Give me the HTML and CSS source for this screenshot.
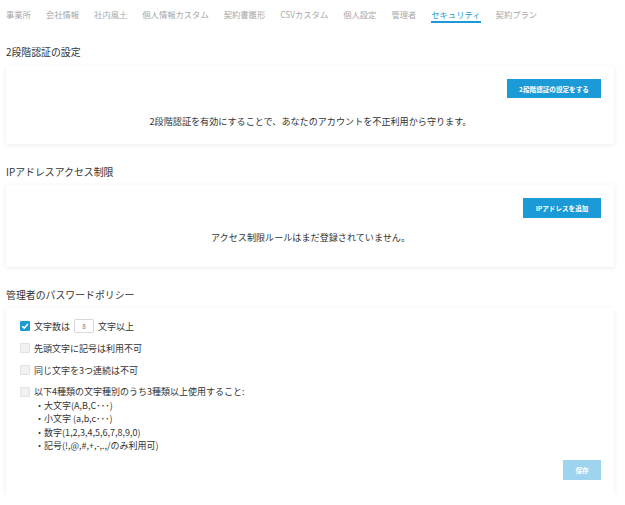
FILE: index.html
```html
<!DOCTYPE html>
<html lang="ja">
<head>
    <meta charset="UTF-8">
    <title>セキュリティ</title>
    <link rel="stylesheet" href="styles.css">
</head>
<body>
    <div class="pagina">
        <nav class="abas">
            <a class="aba">事業所</a>
            <a class="aba">会社情報</a>
            <a class="aba">社内風土</a>
            <a class="aba">個人情報カスタム</a>
            <a class="aba">契約書雛形</a>
            <a class="aba">CSVカスタム</a>
            <a class="aba">個人設定</a>
            <a class="aba">管理者</a>
            <a class="aba ativa">セキュリティ</a>
            <a class="aba">契約プラン</a>
        </nav>

        <h2 class="titulo primeiro">2段階認証の設定</h2>
        <div class="cartao cartao-2fa">
            <div class="acoes"><button class="botao botao-2fa">2段階認証の設定をする</button></div>
            <p class="texto">2段階認証を有効にすることで、あなたのアカウントを不正利用から守ります。</p>
        </div>

        <h2 class="titulo">IPアドレスアクセス制限</h2>
        <div class="cartao cartao-ip">
            <div class="acoes"><button class="botao botao-ip">IPアドレスを追加</button></div>
            <p class="texto">アクセス制限ルールはまだ登録されていません。</p>
        </div>

        <h2 class="titulo">管理者のパスワードポリシー</h2>
        <div class="cartao cartao-senha">
            <div class="linha">
                <span class="caixa marcada">
                    <svg viewBox="0 0 10 10" width="10" height="10"><path d="M2.2 5.2 L4.2 7.1 L7.9 2.9" fill="none" stroke="#fff" stroke-width="1.5"/></svg>
                </span>
                <span>文字数は</span>
                <input class="numero" type="text" value="8">
                <span>文字以上</span>
            </div>
            <div class="linha">
                <span class="caixa"></span>
                <span>先頭文字に記号は利用不可</span>
            </div>
            <div class="linha">
                <span class="caixa"></span>
                <span>同じ文字を3つ連続は不可</span>
            </div>
            <div class="linha linha-lista">
                <span class="caixa"></span>
                <div class="lista">
                    <div>以下4種類の文字種別のうち3種類以上使用すること:</div>
                    <div class="item">・大文字(A,B,C･･･)</div>
                    <div class="item">・小文字 (a,b,c･･･)</div>
                    <div class="item">・数字(1,2,3,4,5,6,7,8,9,0)</div>
                    <div class="item">・記号(!,@,#,+,-,.,/のみ利用可)</div>
                </div>
            </div>
            <div class="acoes"><button class="botao botao-salvar" disabled>保存</button></div>
        </div>
    </div>
</body>
</html>
```

FILE: styles.css
```css
body {
    margin: 0;
    padding: 0;
    background-color: #fff;
    font-family: "Noto Sans CJK JP", "Noto Sans", sans-serif;
    color: #333;
}
.pagina {
    width: 625px;
    padding: 8px 11px 0 6px;
    box-sizing: border-box;
}
.abas {
    display: flex;
    gap: 15px;
    padding-left: 0;
}
.aba {
    font-size: 8.3px;
    line-height: 12px;
    color: #a8a8a8;
    border-bottom: 2px solid transparent;
    padding-bottom: 1px;
    white-space: nowrap;
}
.aba.ativa {
    color: #1a9ad6;
    border-bottom-color: #1a9ad6;
}
.titulo {
    font-size: 9.9px;
    font-weight: normal;
    line-height: 14px;
    margin: 21px 0 6px;
    color: #333;
}
.titulo.primeiro {
    margin-top: 22px;
    margin-bottom: 7px;
}
.cartao {
    background: #fff;
    box-shadow: 0 1px 5px rgba(0, 0, 0, 0.08);
    padding: 13px 13px 0 14px;
}
.acoes {
    display: flex;
    justify-content: flex-end;
}
.botao {
    background-color: #1a9ad6;
    color: #fff;
    border: none;
    font-family: inherit;
    font-size: 6.6px;
    font-weight: bold;
    padding: 0;
    cursor: pointer;
}
.botao-2fa {
    width: 94px;
    height: 19px;
}
.botao-ip {
    width: 78px;
    height: 20px;
}
.botao-salvar {
    width: 38px;
    height: 20px;
    background-color: #9fd4ee;
}
.texto {
    text-align: center;
    font-size: 9.1px;
    line-height: 14px;
    margin: 0;
}
.cartao-2fa .texto {
    margin-top: 16px;
    padding-bottom: 16px;
}
.cartao-ip .texto {
    margin-top: 12px;
    padding-bottom: 23px;
}
.cartao-senha {
    padding-top: 7px;
    padding-bottom: 15px;
    font-size: 9px;
}
.linha {
    display: flex;
    align-items: center;
    gap: 4px;
    height: 22px;
}
.linha-lista {
    align-items: flex-start;
    height: auto;
    margin-top: 4px;
}
.linha-lista .caixa {
    margin-top: 2px;
}
.caixa {
    width: 10px;
    height: 10px;
    box-sizing: border-box;
    border: 1px solid #e2e2e2;
    background: #f1f1f1;
    border-radius: 1px;
    display: flex;
    flex-shrink: 0;
}
.caixa.marcada {
    background: #1a9ad6;
    border-color: #1a9ad6;
}
.caixa svg {
    margin: -1px;
}
.numero {
    width: 20px;
    height: 14px;
    box-sizing: border-box;
    border: 1px solid #d8d8d8;
    border-radius: 2px;
    text-align: center;
    font-size: 6.5px;
    color: #777;
    padding: 0;
    font-family: inherit;
}
.lista {
    line-height: 13.6px;
}
.item {
    padding-left: 1px;
}
.cartao-senha .acoes {
    margin-top: 7px;
}
```
